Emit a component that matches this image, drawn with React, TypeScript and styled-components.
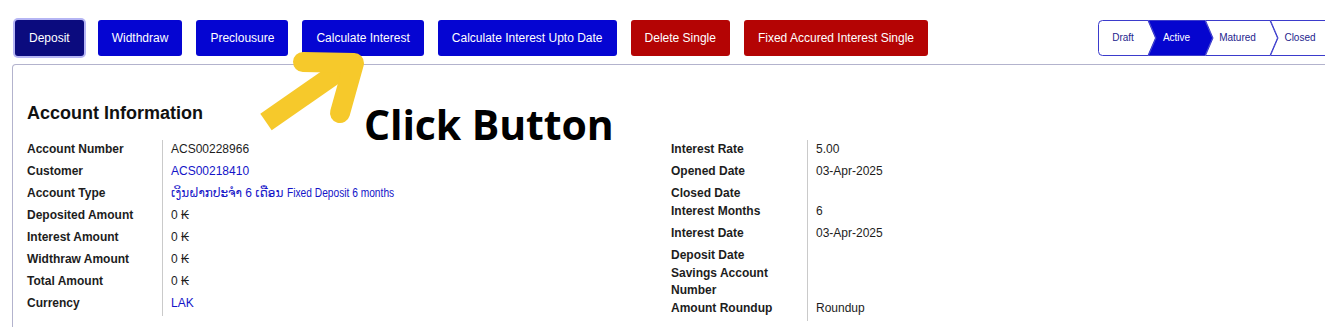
import React from 'react'
import styled, { createGlobalStyle } from 'styled-components'

const GlobalStyle = createGlobalStyle`
  html, body {
    margin: 0;
    padding: 0;
    background: #ffffff;
  }
  body {
    font-family: 'Liberation Sans', Arial, 'DejaVu Sans', sans-serif;
    color: #1d1d1d;
  }
`

type Tone = 'active' | 'primary' | 'danger'

const actions: { label: string; tone: Tone }[] = [
  { label: 'Deposit', tone: 'active' },
  { label: 'Widthdraw', tone: 'primary' },
  { label: 'Preclousure', tone: 'primary' },
  { label: 'Calculate Interest', tone: 'primary' },
  { label: 'Calculate Interest Upto Date', tone: 'primary' },
  { label: 'Delete Single', tone: 'danger' },
  { label: 'Fixed Accured Interest Single', tone: 'danger' },
]

const steps = [
  { label: 'Draft', width: 50 },
  { label: 'Active', width: 57, current: true },
  { label: 'Matured', width: 65 },
  { label: 'Closed', width: 60 },
]

type Field = { label: string; value?: string; extra?: string; link?: boolean }

const leftFields: Field[] = [
  { label: 'Account Number', value: 'ACS00228966' },
  { label: 'Customer', value: 'ACS00218410', link: true },
  { label: 'Account Type', value: 'ເງິນຝາກປະຈຳ 6 ເດືອນ ', extra: 'Fixed Deposit 6 months', link: true },
  { label: 'Deposited Amount', value: '0 ₭' },
  { label: 'Interest Amount', value: '0 ₭' },
  { label: 'Widthraw Amount', value: '0 ₭' },
  { label: 'Total Amount', value: '0 ₭' },
  { label: 'Currency', value: 'LAK', link: true },
]

const rightFields: Field[] = [
  { label: 'Interest Rate', value: '5.00' },
  { label: 'Opened Date', value: '03-Apr-2025' },
  { label: 'Closed Date' },
  { label: 'Interest Months', value: '6' },
  { label: 'Interest Date', value: '03-Apr-2025' },
  { label: 'Deposit Date' },
  { label: 'Savings Account Number' },
  { label: 'Amount Roundup', value: 'Roundup' },
]

const StepShape = ({ width, first, current }: { width: number; first?: boolean; current?: boolean }) => {
  const w = width
  const d = first
    ? `M4.5 0.5 H${w} L${w + 7.5} 18 L${w} 35.5 H4.5 Q0.5 35.5 0.5 31.5 V4.5 Q0.5 0.5 4.5 0.5 Z`
    : `M0.5 0.5 H${w} L${w + 7.5} 18 L${w} 35.5 H0.5 L8 18 Z`
  return (
    <StepSvg width={w + 8} height={36} viewBox={`0 0 ${w + 8} 36`}>
      <path d={d} fill={current ? '#0505cf' : '#ffffff'} stroke="#3b3bcc" strokeWidth={1} />
    </StepSvg>
  )
}

const FieldBlock = ({ fields, labelWidth }: { fields: Field[]; labelWidth: number }) => (
  <FieldList>
    {fields.map((f) => (
      <FieldRow key={f.label} $labelWidth={labelWidth}>
        <FieldLabel>{f.label}</FieldLabel>
        <FieldValue $link={f.link}>
          {f.value}
          {f.extra && <NarrowText>{f.extra}</NarrowText>}
        </FieldValue>
      </FieldRow>
    ))}
  </FieldList>
)

const App: React.FC = () => {
  return (
    <Page>
      <GlobalStyle />
      <Viewport>
        <Content>
          <Toolbar>
            {actions.map((a) => (
              <ActionButton key={a.label} $tone={a.tone}>
                {a.label}
              </ActionButton>
            ))}
            <StatusBar>
              {steps.map((s, i) => (
                <Step key={s.label} $width={s.width}>
                  <StepShape width={s.width} first={i === 0} current={s.current} />
                  <StepLabel $current={s.current}>{s.label}</StepLabel>
                </Step>
              ))}
            </StatusBar>
          </Toolbar>

          <Card>
            <Heading>Account Information</Heading>
            <Columns>
              <FieldBlock fields={leftFields} labelWidth={135} />
              <FieldBlock fields={rightFields} labelWidth={136} />
            </Columns>
          </Card>
        </Content>
      </Viewport>

      {/* tutorial annotation drawn over the screen */}
      <ArrowSvg width={1339} height={327} viewBox="0 0 1339 327">
        <line x1={266} y1={122} x2={348} y2={65} stroke="#f6c92b" strokeWidth={20} />
        <polyline
          points="303,62 354,63 340,113"
          fill="none"
          stroke="#f6c92b"
          strokeWidth={20}
          strokeLinecap="round"
          strokeLinejoin="round"
        />
      </ArrowSvg>
      <Callout>Click Button</Callout>
    </Page>
  )
}

const Page = styled.div`
  position: relative;
  width: 1339px;
  height: 327px;
  overflow: hidden;
  background: #ffffff;
`

const Viewport = styled.div`
  width: 1325px;
  height: 327px;
  overflow: hidden;
`

const Content = styled.div`
  width: 1345px;
  box-sizing: border-box;
  padding: 20px 7px 0 12px;
`

const Toolbar = styled.div`
  display: flex;
  align-items: center;
  gap: 14px;
  padding-left: 3px;
  height: 36px;
`

const toneColors: Record<Tone, string> = {
  active: '#0b0b7e',
  primary: '#0505d2',
  danger: '#b40404',
}

const ActionButton = styled.button<{ $tone: Tone }>`
  height: 36px;
  padding: 0 14px;
  border: none;
  border-radius: 3px;
  background: ${(p) => toneColors[p.$tone]};
  color: #ffffff;
  font-family: 'Liberation Sans', Arial, sans-serif;
  font-size: 12px;
  white-space: nowrap;
  box-shadow: ${(p) => (p.$tone === 'active' ? '0 0 0 2px rgba(120, 120, 235, 0.55)' : 'none')};
  cursor: pointer;
`

const StatusBar = styled.div`
  display: flex;
  margin-left: auto;
  margin-top: -1px;
`

const Step = styled.div<{ $width: number }>`
  position: relative;
  width: ${(p) => p.$width + 8}px;
  height: 36px;
  margin-right: -8px;
  display: flex;
  align-items: center;
  justify-content: center;
  padding-right: 8px;
  box-sizing: border-box;

  &:last-child {
    margin-right: 0;
  }
`

const StepSvg = styled.svg`
  position: absolute;
  left: 0;
  top: 0;
`

const StepLabel = styled.span<{ $current?: boolean }>`
  position: relative;
  font-size: 10px;
  color: ${(p) => (p.$current ? '#ffffff' : '#1e1e8e')};
`

const Card = styled.div`
  margin-top: 8px;
  border: 1px solid #b3b3cd;
  border-bottom: none;
  border-radius: 4px 4px 0 0;
  padding: 37px 0 0 14px;
  height: 300px;
`

const Heading = styled.h2`
  margin: 0 0 16px;
  font-size: 18px;
  line-height: 22px;
  font-weight: 700;
  color: #111111;
`

const Columns = styled.div`
  display: grid;
  grid-template-columns: 644px 1fr;
`

const FieldList = styled.div`
  display: flex;
  flex-direction: column;
`

const FieldRow = styled.div<{ $labelWidth: number }>`
  display: grid;
  grid-template-columns: ${(p) => p.$labelWidth}px 1fr;
  font-size: 12px;
  line-height: 17px;
`

const FieldLabel = styled.div`
  padding-top: 1px;
  font-weight: 700;
  color: #1d1d1d;
`

const FieldValue = styled.div<{ $link?: boolean }>`
  padding: 1px 0 4px 8px;
  border-left: 1px solid #cacaca;
  color: ${(p) => (p.$link ? '#1414c8' : '#1d1d1d')};
  font-family: 'Liberation Sans', Arial, 'DejaVu Sans', 'Noto Sans', sans-serif;
  white-space: nowrap;
`

const NarrowText = styled.span`
  display: inline-block;
  transform: scaleX(0.85);
  transform-origin: left center;
`

const ArrowSvg = styled.svg`
  position: absolute;
  left: 0;
  top: 0;
  pointer-events: none;
`

const Callout = styled.div`
  position: absolute;
  left: 364px;
  top: 104px;
  font-family: 'Open Sans', 'DejaVu Sans', sans-serif;
  font-weight: 700;
  font-size: 41px;
  line-height: 41px;
  letter-spacing: -0.1px;
  color: #000000;
  white-space: nowrap;
  pointer-events: none;
`

export default App
